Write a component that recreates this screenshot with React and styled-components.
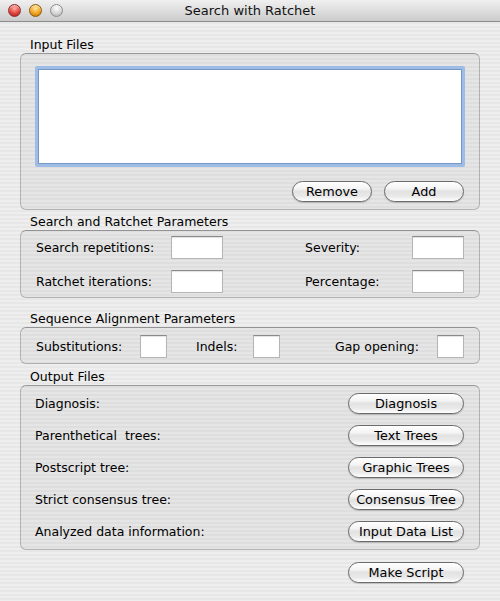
import React from "react";
import styled, { createGlobalStyle } from "styled-components";

const Global = createGlobalStyle`
  html, body { margin: 0; padding: 0; }
  body {
    width: 500px;
    height: 601px;
    overflow: hidden;
    font-family: "DejaVu Sans", "Liberation Sans", sans-serif;
    color: #000;
  }
`;

const Window = styled.div`
  width: 500px;
  height: 601px;
  display: flex;
  flex-direction: column;
  background: repeating-linear-gradient(
    to bottom,
    #eeeeee 0px,
    #eeeeee 2px,
    #e7e7e7 2px,
    #e7e7e7 4px
  );
`;

const TitleBar = styled.div`
  height: 21px;
  flex: 0 0 21px;
  display: flex;
  align-items: center;
  position: relative;
  border-bottom: 1px solid #8c8c8c;
  background: linear-gradient(to bottom, #f0f0f0 0%, #dedede 50%, #cbcbcb 100%);
`;

const Lights = styled.div`
  display: flex;
  gap: 8px;
  padding-left: 8px;
`;

const Light = styled.span`
  width: 13px;
  height: 13px;
  border-radius: 50%;
  box-sizing: border-box;
  border: 1px solid ${(p) => p.$edge};
  background: radial-gradient(circle at 50% 30%, ${(p) => p.$hi} 0%, ${(p) => p.$mid} 55%, ${(p) => p.$lo} 100%);
  box-shadow: inset 0 1px 1px rgba(255, 255, 255, 0.6);
`;

const Title = styled.div`
  position: absolute;
  left: 0;
  right: 0;
  text-align: center;
  font-size: 13px;
  line-height: 21px;
  color: #111;
  pointer-events: none;
`;

const Content = styled.div`
  display: flex;
  flex-direction: column;
  padding: 15px 20px 0 20px;
`;

const Section = styled.section`
  display: flex;
  flex-direction: column;
  margin-top: ${(p) => p.$top || 0}px;
`;

const SectionLabel = styled.div`
  font-size: 12.5px;
  line-height: 16px;
  height: 16px;
  padding-left: 10px;
  color: #000;
`;

const Group = styled.div`
  box-sizing: border-box;
  width: 460px;
  border: 1px solid rgba(0, 0, 0, 0.22);
  border-top-color: rgba(0, 0, 0, 0.34);
  border-radius: 6px;
  background: rgba(0, 0, 0, 0.035);
  padding: ${(p) => p.$pad};
`;

const InputGroup = styled(Group)`
  display: flex;
  flex-direction: column;
  gap: 14px;
`;

const FileList = styled.div`
  box-sizing: border-box;
  width: 430px;
  height: 101px;
  background: #fff;
  border: 3px solid #9dbde6;
  border-radius: 2px;
  box-shadow: inset 0 0 0 1px #7896c4;
`;

const ButtonRow = styled.div`
  display: flex;
  justify-content: flex-end;
  gap: 12px;
  padding-right: 1px;
`;

const Button = styled.button`
  box-sizing: border-box;
  width: ${(p) => p.$w}px;
  height: 21px;
  padding: 0;
  border: 1px solid #6a6a6a;
  border-radius: 11px;
  background: linear-gradient(
    to bottom,
    #ffffff 0%,
    #f4f4f4 35%,
    #e2e2e2 50%,
    #e9e9e9 75%,
    #ffffff 100%
  );
  box-shadow: 0 1px 1px rgba(0, 0, 0, 0.18);
  font-family: "DejaVu Sans", "Liberation Sans", sans-serif;
  font-size: 12.8px;
  line-height: 19px;
  color: #000;
  text-align: center;
  white-space: nowrap;
`;

const ParamGrid = styled.div`
  display: grid;
  grid-template-columns: ${(p) => p.$cols};
  row-gap: ${(p) => p.$rowGap || 0}px;
  align-items: center;
`;

const FieldLabel = styled.span`
  font-size: 12.5px;
  line-height: 16px;
  white-space: pre;
  color: #000;
`;

const Field = styled.div`
  box-sizing: border-box;
  width: ${(p) => p.$w}px;
  height: 23px;
  background: #fff;
  border: 1px solid #b5b5b5;
  border-top-color: #8a8a8a;
  box-shadow: inset 0 1px 1px rgba(0, 0, 0, 0.12);
`;

const OutputGroup = styled(Group)`
  display: flex;
  flex-direction: column;
  gap: 11px;
`;

const OutputRow = styled.div`
  display: flex;
  align-items: center;
  justify-content: space-between;
`;

const Footer = styled.div`
  display: flex;
  justify-content: flex-end;
  padding-right: 16px;
  margin-top: 12px;
`;

const outputs = [
  ["Diagnosis:", "Diagnosis"],
  ["Parenthetical  trees:", "Text Trees"],
  ["Postscript tree:", "Graphic Trees"],
  ["Strict consensus tree:", "Consensus Tree"],
  ["Analyzed data information:", "Input Data List"],
];

export default function App() {
  return (
    <>
      <Global />
      <Window>
        <TitleBar>
          <Lights>
            <Light $edge="#8a2a2a" $hi="#ffb0a8" $mid="#e0443a" $lo="#9c1d17" />
            <Light $edge="#8a5a10" $hi="#ffe7a0" $mid="#f2a21c" $lo="#b06a08" />
            <Light $edge="#8e8e8e" $hi="#ffffff" $mid="#d4d4d4" $lo="#a8a8a8" />
          </Lights>
          <Title>Search with Ratchet</Title>
        </TitleBar>
        <Content>
          <Section>
            <SectionLabel>Input Files</SectionLabel>
            <InputGroup $pad="12px 14px 7px 14px">
              <FileList />
              <ButtonRow>
                <Button $w={80}>Remove</Button>
                <Button $w={80}>Add</Button>
              </ButtonRow>
            </InputGroup>
          </Section>

          <Section $top={4}>
            <SectionLabel>Search and Ratchet Parameters</SectionLabel>
            <Group $pad="5px 15px 4px 15px">
              <ParamGrid $cols="135px 52px 82px 107px 52px" $rowGap={11}>
                <FieldLabel>Search repetitions:</FieldLabel>
                <Field $w={52} />
                <span />
                <FieldLabel>Severity:</FieldLabel>
                <Field $w={52} />
                <FieldLabel>Ratchet iterations:</FieldLabel>
                <Field $w={52} />
                <span />
                <FieldLabel>Percentage:</FieldLabel>
                <Field $w={52} />
              </ParamGrid>
            </Group>
          </Section>

          <Section $top={13}>
            <SectionLabel>Sequence Alignment Parameters</SectionLabel>
            <Group $pad="7px 15px 5px 15px">
              <ParamGrid $cols="104px 27px 29px 57px 27px 55px 102px 27px">
                <FieldLabel>Substitutions:</FieldLabel>
                <Field $w={27} />
                <span />
                <FieldLabel>Indels:</FieldLabel>
                <Field $w={27} />
                <span />
                <FieldLabel>Gap opening:</FieldLabel>
                <Field $w={27} />
              </ParamGrid>
            </Group>
          </Section>

          <Section $top={5}>
            <SectionLabel>Output Files</SectionLabel>
            <OutputGroup $pad="7px 15px 7px 14px">
              {outputs.map(([label, btn]) => (
                <OutputRow key={btn}>
                  <FieldLabel>{label}</FieldLabel>
                  <Button $w={116}>{btn}</Button>
                </OutputRow>
              ))}
            </OutputGroup>
          </Section>

          <Footer>
            <Button $w={116}>Make Script</Button>
          </Footer>
        </Content>
      </Window>
    </>
  );
}
